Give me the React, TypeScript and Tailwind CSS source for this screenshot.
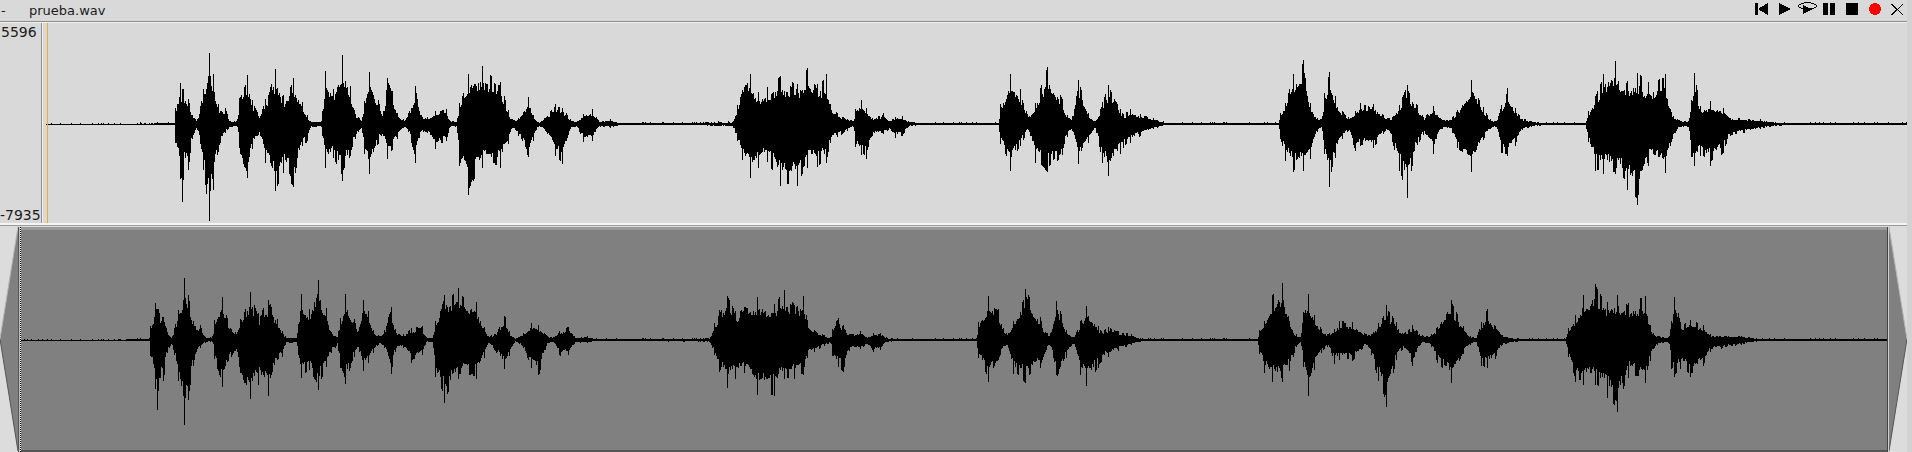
import React from 'react'

type Env = [number, number, number]

// envelope read off the plot: [x, amplitude above the baseline, amplitude below it]
const envelope: Env[] = [
  ...toEnv(160, [
    [0, 251, 257], [44, 250, 258], [45, 205, 310], [60, 130, 420], [65, 150, 510], [70, 150, 400], [85, 180, 390], [95, 225, 300],
    [110, 245, 265], [130, 145, 400], [147, 42, 545], [160, 110, 445], [175, 200, 330], [195, 205, 280], [210, 245, 262],
    [232, 240, 262], [238, 165, 340], [262, 103, 420], [275, 180, 330], [300, 230, 290], [315, 180, 370], [345, 90, 455],
    [370, 170, 400], [400, 115, 445], [425, 185, 320], [440, 225, 310], [450, 245, 265], [483, 245, 262], [487, 205, 300],
    [495, 95, 385], [520, 150, 355], [545, 42, 428], [570, 140, 350], [585, 225, 300], [605, 240, 270], [612, 185, 345],
    [627, 97, 405], [655, 185, 310], [668, 225, 285], [680, 115, 360], [695, 150, 335], [710, 220, 300], [730, 240, 265],
    [745, 220, 280], [765, 140, 370], [778, 220, 290], [800, 235, 280], [825, 215, 330], [857, 205, 310], [870, 245, 262],
    [890, 245, 265], [897, 190, 380], [925, 100, 470], [965, 78, 385], [1020, 127, 385], [1045, 215, 310], [1055, 240, 265],
    [1075, 235, 290], [1105, 170, 355], [1120, 230, 300], [1135, 248, 260], [1160, 230, 280], [1185, 195, 350], [1207, 205, 375],
    [1230, 240, 270], [1250, 245, 262], [1270, 222, 310], [1297, 208, 305], [1315, 245, 262], [1350, 240, 265], [1380, 250, 258],
    [1500, 251, 257],
  ]),
  ...toEnv(700, [
    [98, 248, 262], [105, 230, 280], [112, 190, 310], [125, 155, 360], [150, 105, 415], [175, 160, 385], [200, 145, 365],
    [240, 110, 440], [290, 135, 442], [320, 85, 385], [350, 135, 385], [378, 105, 370], [390, 195, 310], [410, 220, 295],
    [440, 238, 275], [460, 245, 262], [466, 200, 335], [482, 180, 345], [497, 205, 362], [515, 235, 290], [550, 222, 285],
    [570, 245, 270], [585, 232, 295], [605, 230, 290], [625, 245, 262], [650, 250, 258], [895, 251, 257], [900, 195, 315],
    [930, 105, 395], [960, 150, 320], [985, 235, 270], [1005, 190, 370], [1040, 82, 400], [1085, 175, 350], [1100, 228, 295],
    [1115, 235, 270], [1135, 115, 380], [1165, 225, 310], [1185, 245, 265], [1205, 190, 370], [1225, 135, 412], [1260, 210, 345],
    [1270, 225, 325], [1290, 210, 310], [1320, 225, 290], [1360, 235, 270], [1385, 248, 260], [1400, 251, 257],
  ]),
  ...toEnv(1260, [
    [55, 250, 258], [60, 220, 300], [75, 190, 365], [100, 100, 398], [130, 60, 395], [150, 190, 360], [170, 235, 280],
    [185, 240, 265], [192, 160, 345], [208, 95, 450], [225, 170, 355], [245, 215, 300], [265, 235, 275], [285, 215, 335],
    [300, 190, 320], [340, 195, 325], [380, 235, 270], [395, 235, 305], [418, 195, 400], [440, 135, 480], [470, 195, 320],
    [490, 235, 285], [520, 200, 345], [540, 235, 270], [560, 242, 265], [575, 235, 278], [592, 210, 330], [634, 120, 400],
    [670, 205, 300], [690, 240, 270], [710, 245, 262], [722, 200, 340], [740, 145, 352], [765, 205, 320], [785, 238, 272],
    [830, 248, 260], [860, 251, 257], [975, 250, 258], [985, 210, 315], [1005, 170, 395], [1030, 100, 405], [1065, 65, 405],
    [1100, 125, 450], [1132, 100, 500], [1165, 130, 375], [1215, 105, 400], [1230, 210, 320], [1250, 240, 270], [1285, 245, 262],
    [1292, 190, 350], [1302, 100, 380], [1320, 200, 350], [1350, 185, 380], [1390, 205, 340], [1410, 235, 290], [1500, 240, 270],
  ]),
  [1775, 2, 2],
  [1790, 1, 1],
  [1906, 1, 1],
]

function toEnv(originX: number, rows: number[][]): Env[] {
  return rows.map(([x, top, bottom]) => [originX + x / 3, (254 - top) / 3, (bottom - 254) / 3])
}

// columns the envelope was read at keep their full height
const peakColumns = new Set(envelope.map(([x]) => Math.round(x)))

function amplitudeAt(x: number): [number, number] {
  for (let i = 1; i < envelope.length; i++) {
    const [x1, u1, d1] = envelope[i]
    if (x <= x1) {
      const [x0, u0, d0] = envelope[i - 1]
      const t = x1 === x0 ? 0 : (x - x0) / (x1 - x0)
      return [u0 + (u1 - u0) * t, d0 + (d1 - d0) * t]
    }
  }
  return [1, 1]
}

function noise(seed: number) {
  const s = Math.sin(seed * 127.1 + 311.7) * 43758.5453
  return s - Math.floor(s)
}

// solid body with sparse spikes on top, spikes are 2 columns wide at most
function jitter(seed: number) {
  const n = noise(Math.floor(seed / 2))
  if (n > 0.78) return 0.85 + (n - 0.78) * 0.68
  return 0.58 + noise(seed) * 0.18
}

// one vertical stroke per pixel column, like the original peak plot
function wavePath(fromX: number, toX: number, baseY: number, scale: number, shift: (x: number) => number) {
  let d = ''
  for (let x = fromX; x < toX; x++) {
    const source = shift(x)
    const [up, down] = amplitudeAt(source)
    const isPeak = peakColumns.has(Math.round(source))
    const top = Math.max(up * (isPeak ? 1 : jitter(x)) * scale, 0.5)
    const bottom = Math.max(down * (isPeak ? 1 : jitter(x + 501)) * scale, 0.5)
    const speck = up < 2 && noise(x + 900) > 0.86 ? 1 : 0
    d += `M${x + 0.5} ${Math.round(baseY - top - speck)}V${Math.round(baseY + bottom)}`
  }
  return d
}

const Waveform = ({ x, y, w, h, baseY, scale, shift, className }: {
  x: number; y: number; w: number; h: number; baseY: number; scale: number; shift: (x: number) => number; className: string
}) => (
  <svg viewBox={`${x} ${y} ${w} ${h}`} width={w} height={h} className={className} shapeRendering="crispEdges">
    <path d={wavePath(x, x + w, baseY, scale, shift)} stroke="#000" strokeWidth={1} fill="none" />
  </svg>
)

const Icon = ({ w, children }: { w: number; children: React.ReactNode }) => (
  <svg width={w} height={18} viewBox={`0 0 ${w} 18`} className="block shrink-0" shapeRendering="crispEdges">
    {children}
  </svg>
)

const Toolbar = () => (
  <div className="-mr-[2px] flex items-start">
    <Icon w={23}>
      <rect x={5} y={3} width={3} height={12} fill="#000" />
      <path d="M18 3V15L8 9Z" fill="#000" />
    </Icon>
    <Icon w={22}>
      <path d="M6 3V15L18 9Z" fill="#000" />
    </Icon>
    <Icon w={23}>
      <ellipse cx={12.5} cy={6} rx={9} ry={3.2} fill="none" stroke="#000" strokeWidth={1} />
      <path d="M8 5V14L17 9.5Z" fill="#000" />
    </Icon>
    <Icon w={23}>
      <rect x={5} y={3} width={5} height={12} fill="#000" />
      <rect x={12} y={3} width={5} height={12} fill="#000" />
    </Icon>
    <Icon w={23}>
      <rect x={5} y={3} width={12} height={12} fill="#000" />
    </Icon>
    <Icon w={22}>
      <circle cx={11} cy={9} r={6} fill="#ff0000" />
    </Icon>
    <Icon w={23}>
      <path d="M5.5 4L17 15M17 4L5.5 15" stroke="#000" strokeWidth={1} fill="none" />
    </Icon>
  </div>
)

const overviewShift = (x: number) => (x + 25.6) / 1.0035

export default function App() {
  return (
    <div className="flex h-[452px] w-[1912px] overflow-hidden bg-[#d9d9d9] text-[13px] leading-none text-[#1c1c1c] [font-family:'DejaVu_Sans',sans-serif]">
      <div className="flex w-[1907px] shrink-0 flex-col">
        {/* Title bar */}
        <header className="flex h-[21px] shrink-0 items-start justify-between">
          <div className="flex pt-[3px] leading-[15px]">
            <span className="w-[29px] pl-px">-</span>
            <span>prueba.wav</span>
          </div>
          <Toolbar />
        </header>

        {/* Zoomed view */}
        <section className="flex h-[205px] shrink-0 flex-col border-t border-[#8c8c8c]">
          <div className="flex h-[201px] border-t border-[#f2f2f2]">
            <div className="flex w-[41px] shrink-0 flex-col justify-between pb-0 pt-[1px] text-[14px] leading-[16px]">
              <span className="pl-px">5596</span>
              <span>-7935</span>
            </div>
            <div className="w-px shrink-0 bg-[#8f8f8f]" />
            <div className="w-px shrink-0 bg-[#efefef]" />
            <div className="relative flex-1">
              <Waveform x={46} y={23} w={1861} h={201} baseY={124} scale={1} shift={(x) => x} className="ml-[3px] block" />
              <div className="absolute bottom-0 left-[4px] top-0 w-px bg-[#f0a92a]" />
            </div>
          </div>
          <div className="h-[2px] shrink-0 bg-[#f4f4f4]" />
          <div className="h-[2px] shrink-0 bg-[#9a9a9a]" />
        </section>

        {/* Overview */}
        <section className="flex flex-1 bg-[#dcdcdc] pt-px">
          <svg width={18} height={224} viewBox="0 0 18 224" className="block shrink-0">
            <path d="M18 0L0 112L18 224Z" fill="#808080" />
            <path d="M18 0L0 112" stroke="#b4b4b4" strokeWidth={1} fill="none" />
            <path d="M0 112L18 224" stroke="#555" strokeWidth={1} fill="none" />
          </svg>
          <div className="w-px shrink-0 bg-[#555]" />
          <div className="w-px shrink-0 bg-[#bdbdbd]" />
          <div className="w-px shrink-0 border-l border-dotted border-black bg-white" />
          <div className="flex-1 border-b-2 border-t-[3px] border-b-[#555] border-t-[#9a9a9a] bg-[#808080]">
            <Waveform x={21} y={230} w={1866} h={220} baseY={340} scale={0.89} shift={overviewShift} className="block" />
          </div>
          <div className="w-px shrink-0 bg-[#444]" />
          <div className="w-px shrink-0 bg-[#cfcfcf]" />
          <svg width={18} height={224} viewBox="0 0 18 224" className="block shrink-0">
            <path d="M0 0L18 112L0 224Z" fill="#808080" />
            <path d="M0 0L18 112" stroke="#b4b4b4" strokeWidth={1} fill="none" />
            <path d="M18 112L0 224" stroke="#555" strokeWidth={1} fill="none" />
          </svg>
        </section>
      </div>
      <div className="flex-1 bg-[#d2d2d2]" />
    </div>
  )
}
